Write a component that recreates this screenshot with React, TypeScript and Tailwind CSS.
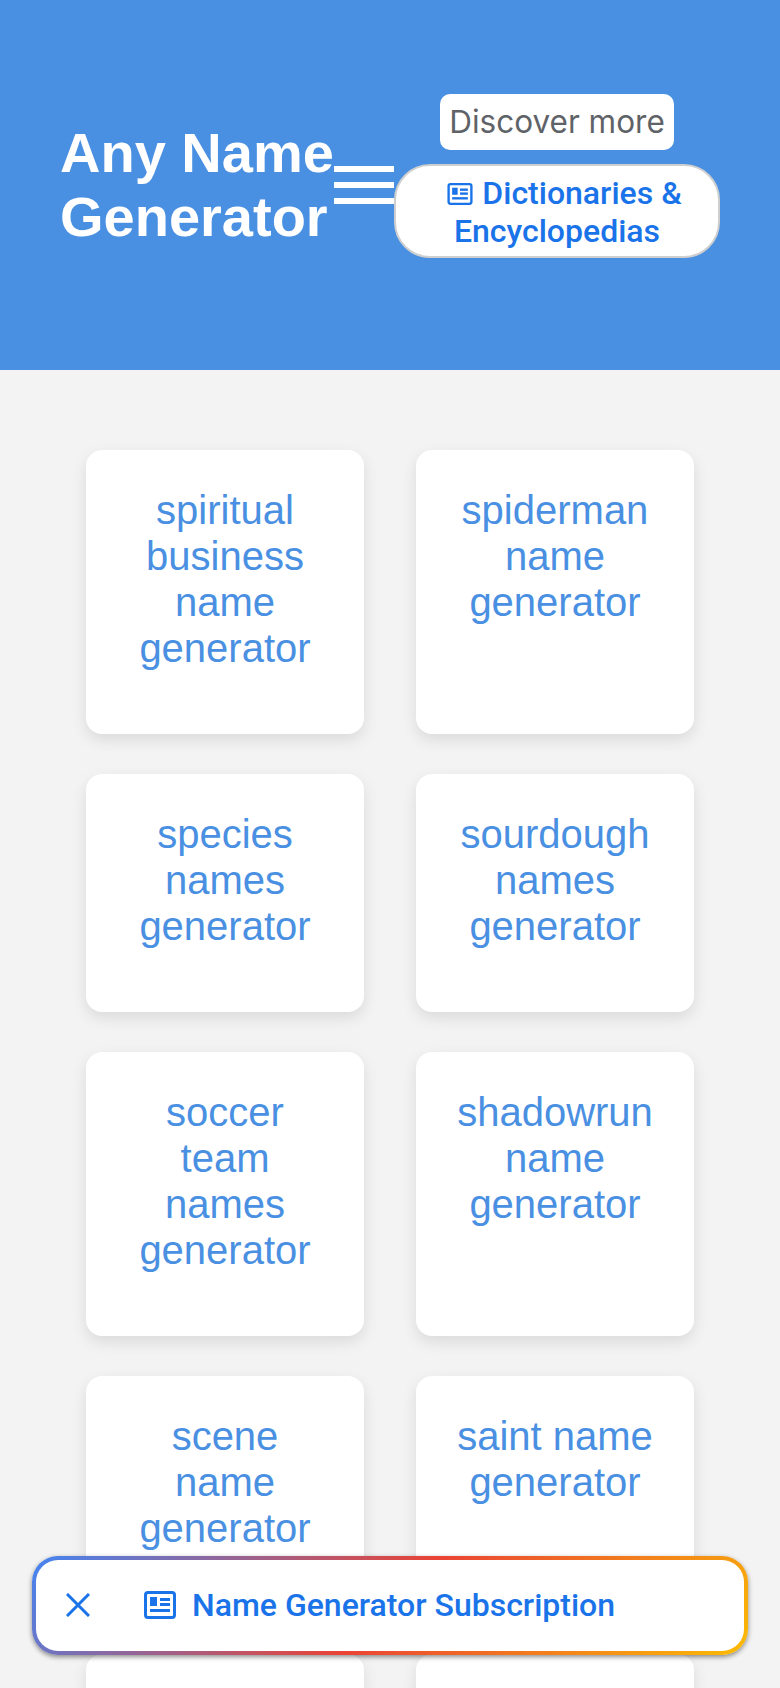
import React from 'react';

const cards = [
  'spiritual business name generator',
  'spiderman name generator',
  'species names generator',
  'sourdough names generator',
  'soccer team names generator',
  'shadowrun name generator',
  'scene name generator',
  'saint name generator',
  'samurai name generator',
  'robot name generator',
];

const NewsIcon: React.FC<{ className?: string }> = ({ className }) => (
  <svg viewBox="0 0 32 28" fill="none" className={className}>
    <rect x="1.5" y="1.5" width="29" height="25" rx="2.5" stroke="currentColor" strokeWidth="3" />
    <rect x="6" y="6" width="7" height="9" fill="currentColor" />
    <rect x="16" y="7" width="10" height="3" fill="currentColor" />
    <rect x="16" y="12" width="10" height="3" fill="currentColor" />
    <rect x="6" y="18" width="20" height="3" fill="currentColor" />
  </svg>
);

export default function App() {
  return (
    <div className="h-[1688px] overflow-hidden bg-[#f3f3f3] font-['Liberation_Sans',Arial,sans-serif]">
      <header className="h-[370px] bg-[#4a90e2] pl-[60px] flex items-center">
        <h1 className="w-[274px] shrink-0 text-[56px] leading-[64px] font-bold text-white">Any Name Generator</h1>
        <div className="w-[60px] shrink-0 flex flex-col gap-[10px]">
          <span className="block h-[6px] bg-white" />
          <span className="block h-[6px] bg-white" />
          <span className="block h-[6px] bg-white" />
        </div>
        <div className="w-[326px] shrink-0 mb-[18px] flex flex-col items-center gap-[14px] font-['Roboto',sans-serif]">
          <div className="h-[56px] w-[234px] flex items-center justify-center bg-white rounded-[10px] font-['Inter',sans-serif] text-[31.5px] text-[#5f6368]">
            Discover more
          </div>
          <div className="w-full h-[94px] flex items-center justify-center border-2 border-[#cfcfcf] rounded-[36px] bg-white px-[30px] pt-[2px] text-center text-[32px] leading-[38px] font-medium text-[#1a73e8]">
            <span>
              <NewsIcon className="inline-block w-[26px] h-[22px] ml-[15px] mr-[9px] align-[-1px]" />
              Dictionaries &amp; Encyclopedias
            </span>
          </div>
        </div>
      </header>

      <main className="grid grid-cols-2 gap-x-[52px] gap-y-[40px] px-[86px] pt-[80px]">
        {cards.map((name) => (
          <a
            key={name}
            className="block bg-white rounded-[16px] shadow-[0_6px_15px_rgba(0,0,0,0.1)] px-[40px] pt-[37px] pb-[63px] text-center text-[40px] leading-[46px] text-[#4a90e2]"
          >
            {name}
          </a>
        ))}
      </main>

      <div className="fixed left-[32px] top-[1556px] w-[716px] h-[99px] p-[4px] rounded-[26px] bg-[linear-gradient(135deg,#4285f4,#ea4335_50%,#fbbc04)] shadow-[0_2px_5px_rgba(0,0,0,0.45)]">
        <div className="h-full bg-white rounded-[22px] pb-[2px] flex items-center font-['Roboto',sans-serif] text-[#1a73e8]">
          <svg viewBox="0 0 24 24" className="ml-[30px] w-[24px] h-[24px]" fill="none" stroke="currentColor" strokeWidth="3">
            <path d="M1 1 L23 23 M23 1 L1 23" />
          </svg>
          <NewsIcon className="ml-[54px] w-[32px] h-[28px]" />
          <span className="ml-[16px] text-[32px] font-medium">Name Generator Subscription</span>
        </div>
      </div>
    </div>
  );
}
